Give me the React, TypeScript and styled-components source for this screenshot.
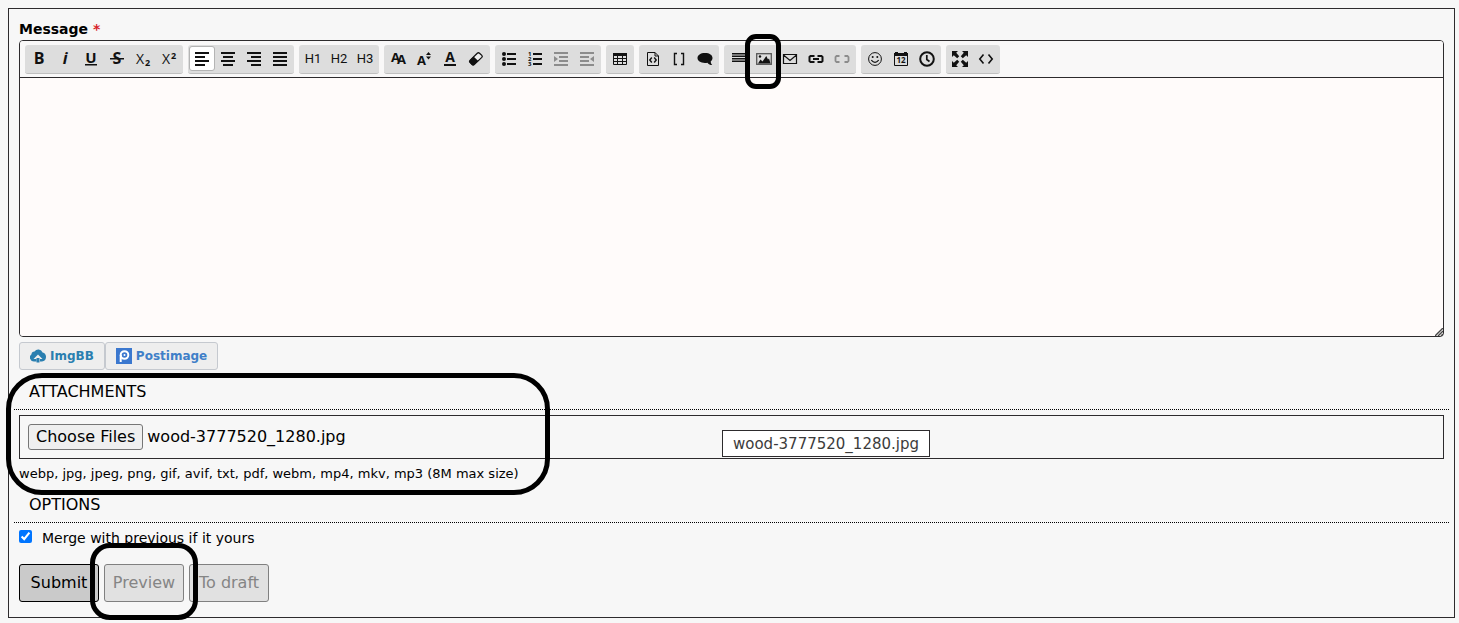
import React, { useEffect, useRef } from 'react';
import styled, { createGlobalStyle, css } from 'styled-components';

const sans = '"DejaVu Sans", Verdana, sans-serif';
const ink = '#2d2b2d';

const GlobalStyle = createGlobalStyle`
  *, *::before, *::after { box-sizing: border-box; }
  body {
    margin: 0;
    background: #f7f7f7;
    color: #000;
    font-family: ${sans};
    font-size: 16px;
  }
`;

const Page = styled.main`
  padding: 8px 4px 5px 8px;
`;

const Panel = styled.form`
  padding: 10px 10px 15px;
  border: 1px solid ${ink};
`;

const FieldLabel = styled.label`
  display: block;
  height: 21px;
  line-height: 21px;
  font-size: 14px;
  font-weight: bold;
`;

const Required = styled.span`
  color: #d8232a;
`;

const Editor = styled.div`
  position: relative;
  border: 1px solid ${ink};
  border-radius: 4px;
`;

const Toolbar = styled.div`
  display: flex;
  flex-wrap: wrap;
  gap: 5px;
  padding: 4px 5px 3px;
  border-bottom: 1px solid ${ink};
  background: #f9f8f8;
  border-radius: 3px 3px 0 0;
`;

const Group = styled.div`
  display: flex;
  padding: 1px 1px 2px;
  background: #dddddd;
  border-bottom: 1px solid #c0c0c0;
  border-radius: 3px;
`;

const Tool = styled.button<{ $active?: boolean; $dim?: boolean }>`
  display: flex;
  align-items: center;
  justify-content: center;
  position: relative;
  width: 26px;
  height: 25px;
  padding: 0;
  border: 0;
  border-radius: 3px;
  background: transparent;
  color: ${(p) => (p.$dim ? '#8c8c8c' : '#111')};
  ${(p) =>
    p.$active &&
    css`
      background: #fff;
      box-shadow: inset 0 0 0 1px #b4b4b4;
    `}
`;

const Heading = styled.span`
  font: 13px/20px Roboto, sans-serif;
`;

const IconSvg = styled.svg`
  overflow: visible;
  fill: currentColor;
  text {
    font-family: 'Open Sans', sans-serif;
    font-weight: 700;
  }
`;

const Message = styled.textarea`
  display: block;
  width: 100%;
  height: 258px;
  padding: 8px;
  border: 0;
  border-radius: 0 0 3px 3px;
  outline: 0;
  resize: vertical;
  background: #fffbfa;
  font: 14px/20px ${sans};
  &::-webkit-resizer { display: none; }
`;

const Grip = styled.svg`
  position: absolute;
  right: 0;
  bottom: 0;
  pointer-events: none;
`;

const Hosts = styled.div`
  display: flex;
  margin-top: 5px;
`;

const HostButton = styled.button<{ $color: string }>`
  display: flex;
  align-items: center;
  gap: 4px;
  height: 28px;
  padding: 0 10px;
  border: 1px solid #c5c9cf;
  border-radius: 3px;
  background: #eeeeee;
  color: ${(p) => p.$color};
  font: bold 12px/16px ${sans};
`;

const Section = styled.section`
  position: relative;
`;

const SectionTitle = styled.h2`
  margin: 0 -5px;
  padding: 8px 15px 7px;
  border-bottom: 1px dotted #000;
  font-size: 16px;
  font-weight: normal;
  line-height: 20px;
`;

const Attachments = styled(Section)`
  padding-top: 4px;
`;

const FileBox = styled.div`
  position: relative;
  margin-top: 5px;
  padding: 8px;
  border: 1px solid ${ink};
`;

const FileInput = styled.input`
  display: block;
  width: 100%;
  height: 26px;
  font: 16px/24px ${sans};
  &::file-selector-button {
    height: 26px;
    margin: 0 4px 0 0;
    padding: 0 7px;
    border: 1px solid #767676;
    border-radius: 3px;
    background: #efefef;
    color: #000;
    font: 16px/22px ${sans};
  }
`;

const Tip = styled.div`
  position: absolute;
  top: 14px;
  left: 702px;
  padding: 3px 0 2px;
  width: 208px;
  border: 1px solid ${ink};
  background: #fff;
  color: #3c3c3c;
  font-size: 15px;
  line-height: 20px;
  text-align: center;
`;

const Note = styled.p`
  margin: 0;
  padding-top: 2px;
  font-size: 13px;
  line-height: 26px;
`;

const Option = styled.label`
  display: flex;
  align-items: center;
  gap: 10px;
  padding-top: 2px;
  font-size: 14px;
  line-height: 26px;
  input {
    width: 13px;
    height: 13px;
    margin: 0 0 4px;
  }
`;

const Actions = styled.div`
  display: flex;
  gap: 5px;
  margin-top: 13px;
`;

const ActionItem = styled.div`
  position: relative;
`;

const Action = styled.button`
  width: 80px;
  height: 38px;
  padding: 0;
  border: 1px solid #000;
  border-radius: 3px;
  background: #cacaca;
  color: #000;
  font: 16px/20px ${sans};
  &:disabled {
    border-color: #808080;
    background: #e1e1e1;
    color: #858585;
  }
`;

const Mark = styled.span<{ $top: number; $left: number; $w: number; $h: number; $r: number }>`
  position: absolute;
  z-index: 2;
  top: ${(p) => p.$top}px;
  left: ${(p) => p.$left}px;
  width: ${(p) => p.$w}px;
  height: ${(p) => p.$h}px;
  border: 5px solid #000;
  border-radius: ${(p) => p.$r}px;
  pointer-events: none;
`;

const Icon = ({ children }: { children: React.ReactNode }) => (
  <IconSvg width="16" height="16" viewBox="0 0 16 16" aria-hidden="true">
    {children}
  </IconSvg>
);

const Lines = ({ rows }: { rows: [number, number][] }) => (
  <Icon>
    {rows.map(([x, w], i) => (
      <rect key={i} x={x} y={1 + i * 4} width={w} height="2" />
    ))}
  </Icon>
);

const icons = {
  bold: (
    <Icon>
      <text x="8" y="13" fontSize="16" textAnchor="middle">B</text>
    </Icon>
  ),
  italic: (
    <Icon>
      <text x="8" y="13" fontSize="16" fontStyle="italic" textAnchor="middle">i</text>
    </Icon>
  ),
  underline: (
    <Icon>
      <text x="8" y="12" fontSize="15" textAnchor="middle">U</text>
      <rect x="2" y="13" width="12" height="1.500" />
    </Icon>
  ),
  strike: (
    <Icon>
      <text x="8" y="13" fontSize="16" textAnchor="middle">S</text>
      <rect x="1" y="7" width="14" height="1.500" />
    </Icon>
  ),
  subscript: (
    <Icon>
      <text x="1" y="13" fontSize="14">
        <tspan fontWeight="400">X</tspan>
        <tspan dx="1" dy="2" fontSize="9">2</tspan>
      </text>
    </Icon>
  ),
  superscript: (
    <Icon>
      <text x="1" y="13" fontSize="14">
        <tspan fontWeight="400">X</tspan>
        <tspan dx="1" dy="-5" fontSize="9">2</tspan>
      </text>
    </Icon>
  ),
  fonts: (
    <Icon>
      <text x="1" y="11" fontSize="13">
        A<tspan dx="-3" dy="2">A</tspan>
      </text>
    </Icon>
  ),
  size: (
    <Icon>
      <text x="1" y="14" fontSize="13">A</text>
      <path d="M12.500 1 15 4h-5zM12.500 8.500 10 5.500h5z" />
    </Icon>
  ),
  color: (
    <Icon>
      <text x="8" y="11" fontSize="14" textAnchor="middle">A</text>
      <rect x="2" y="13" width="12" height="2" />
    </Icon>
  ),
  eraser: (
    <Icon>
      <path
        d="M9.300 2.200 2 9.400q-1 1 0 2l2.200 2.200q1 1 2 0L13.800 6.400q1-1 0-2l-2.300-2.200q-1.100-1-2.200 0z"
        fill="#eee"
        stroke="currentColor"
        strokeWidth="1.300"
      />
      <path d="M5.500 5.500 1.600 9.500q-.8 1 0 2l2.300 2.400q1 .8 2 0L10.300 10z" />
    </Icon>
  ),
  bullets: (
    <Icon>
      {[3, 8, 13].map((y) => (
        <g key={y}>
          <circle cx="3" cy={y} r="2" />
          <rect x="6" y={y - 1} width="9" height="2" />
        </g>
      ))}
    </Icon>
  ),
  numbers: (
    <Icon>
      <text y="5" fontSize="6">
        <tspan x="1">1</tspan>
        <tspan x="1" dy="5">2</tspan>
        <tspan x="1" dy="5">3</tspan>
      </text>
      <path d="M6 2h9v2H6zM6 7h9v2H6zM6 12h9v2H6z" />
    </Icon>
  ),
  indent: (
    <Icon>
      <path d="M1 1h14v2H1zM6 5h9v2H6zM6 9h9v2H6zM1 13h14v2H1zM1 5l4 3-4 3z" />
    </Icon>
  ),
  outdent: (
    <Icon>
      <path d="M1 1h14v2H1zM1 5h9v2H1zM1 9h9v2H1zM1 13h14v2H1zM15 5l-4 3 4 3z" />
    </Icon>
  ),
  table: (
    <Icon>
      <path d="M1 2h14v3H1z" />
      <path d="M1.500 2.500h13v11h-13zM1 7.500h14M1 10.500h14M5.500 5v9M10.500 5v9" fill="none" stroke="currentColor" />
    </Icon>
  ),
  code: (
    <Icon>
      <path d="M3 1.500h7l3.500 3.500v9.500h-11v-13zM10 1.500v3.500h3.500" fill="none" stroke="currentColor" />
      <path d="M6.800 6.500 4.800 9l2 2.500M9.200 6.500l2 2.500-2 2.500" fill="none" stroke="currentColor" strokeWidth="1.400" />
    </Icon>
  ),
  brackets: (
    <Icon>
      <path d="M6 2.500H3.500v11H6M10 2.500h2.500v11H10" fill="none" stroke="currentColor" strokeWidth="1.400" />
    </Icon>
  ),
  quote: (
    <Icon>
      <path d="M8 2c4.500 0 7.500 2 7.500 5 0 1.500-.7 2.600-1.800 3.400.1 1.500.6 2.500 1.500 3.600-2 0-3.700-.8-4.800-2.300-.8.200-1.500.2-2.400.2-4.500 0-7.500-2-7.500-4.900S3.500 2 8 2z" />
    </Icon>
  ),
  rule: (
    <Icon>
      <path d="M2 2h13v1.500H2zM2 4.500h13V6H2zM2 7h13v1.500H2zM2 9.500h13V11H2z" />
    </Icon>
  ),
  image: (
    <Icon>
      <rect x=".7" y="2.700" width="14.600" height="10.600" fill="none" stroke="#555" strokeWidth="1.300" />
      <circle cx="4" cy="5.500" r="1.200" />
      <path d="M2 12.500 4.500 8.500 6.500 10.500 10.300 5 12 8.500 13 7.500 14.500 12.500z" />
    </Icon>
  ),
  email: (
    <Icon>
      <path d="M1.500 3.500h13v9h-13zM1.500 4 8 9.500 14.500 4" fill="none" stroke="currentColor" strokeWidth="1.200" />
    </Icon>
  ),
  link: (
    <Icon>
      <path d="M6.500 5H2.500L1.500 6v4L2.500 11h4M9.500 5h4l1 1v4l-1 1h-4M5 8h6" fill="none" stroke="currentColor" strokeWidth="2" />
    </Icon>
  ),
  unlink: (
    <Icon>
      <path d="M5.500 5H2.500L1.500 6v4L2.500 11h3M10.500 5h3l1 1v4l-1 1h-3" fill="none" stroke="currentColor" strokeWidth="1.800" />
    </Icon>
  ),
  smile: (
    <Icon>
      <circle cx="8" cy="8" r="6.400" fill="none" stroke="currentColor" />
      <circle cx="5.700" cy="6" r="1" />
      <circle cx="10.300" cy="6" r="1" />
      <path d="M4.300 9.200q3.700 4.300 7.400 0" fill="none" stroke="currentColor" strokeWidth="1.200" />
    </Icon>
  ),
  calendar: (
    <Icon>
      <path d="M1 2h1V1h3v1h6V1h3v1h1v3H1z" />
      <path d="M1.500 4v10.500h13V4" fill="none" stroke="currentColor" />
      <text x="8" y="12" fontSize="8" textAnchor="middle">12</text>
    </Icon>
  ),
  clock: (
    <Icon>
      <circle cx="8" cy="8" r="6.800" fill="none" stroke="currentColor" strokeWidth="2" />
      <path d="M7.800 4v4.500l2.700 2" fill="none" stroke="currentColor" strokeWidth="1.700" />
    </Icon>
  ),
  maximize: (
    <Icon>
      <path d="M0 0h6L4.200 1.800 7.200 5.200 5.200 7.200 1.800 4.200 0 6zM16 0v6l-1.800-1.800-3.400 3-2-2 3-3.400L10 0zM0 16v-6l1.800 1.800 3.400-3 2 2-3 3.400L6 16zM16 16h-6l1.800-1.800-3-3.400 2-2 3.400 3L16 10z" />
    </Icon>
  ),
  source: (
    <Icon>
      <path d="M5.500 3.500 1.800 8l3.700 4.500M10.500 3.500 14.200 8l-3.700 4.500" fill="none" stroke="currentColor" strokeWidth="1.600" />
    </Icon>
  ),
};

type ToolDef = { name: string; body: React.ReactNode; active?: boolean; dim?: boolean; marked?: boolean };

const groups: ToolDef[][] = [
  [
    { name: 'Bold', body: icons.bold },
    { name: 'Italic', body: icons.italic },
    { name: 'Underline', body: icons.underline },
    { name: 'Strikethrough', body: icons.strike },
    { name: 'Subscript', body: icons.subscript },
    { name: 'Superscript', body: icons.superscript },
  ],
  [
    { name: 'Align left', active: true, body: <Lines rows={[[1, 14], [1, 10], [1, 14], [1, 10]]} /> },
    { name: 'Center', body: <Lines rows={[[1, 14], [3, 10], [1, 14], [3, 10]]} /> },
    { name: 'Align right', body: <Lines rows={[[1, 14], [5, 10], [1, 14], [5, 10]]} /> },
    { name: 'Justify', body: <Lines rows={[[1, 14], [1, 14], [1, 14], [1, 14]]} /> },
  ],
  [
    { name: 'Heading 1', body: <Heading>H1</Heading> },
    { name: 'Heading 2', body: <Heading>H2</Heading> },
    { name: 'Heading 3', body: <Heading>H3</Heading> },
  ],
  [
    { name: 'Font name', body: icons.fonts },
    { name: 'Font size', body: icons.size },
    { name: 'Font color', body: icons.color },
    { name: 'Remove formatting', body: icons.eraser },
  ],
  [
    { name: 'Bullet list', body: icons.bullets },
    { name: 'Numbered list', body: icons.numbers },
    { name: 'Add indent', dim: true, body: icons.indent },
    { name: 'Remove indent', dim: true, body: icons.outdent },
  ],
  [{ name: 'Insert a table', body: icons.table }],
  [
    { name: 'Code', body: icons.code },
    { name: 'Inline code', body: icons.brackets },
    { name: 'Insert a quote', body: icons.quote },
  ],
  [
    { name: 'Insert a horizontal rule', body: icons.rule },
    { name: 'Insert an image', body: icons.image, marked: true },
    { name: 'Insert an email', body: icons.email },
    { name: 'Insert a link', body: icons.link },
    { name: 'Unlink', dim: true, body: icons.unlink },
  ],
  [
    { name: 'Insert an emoticon', body: icons.smile },
    { name: 'Insert current date', body: icons.calendar },
    { name: 'Insert current time', body: icons.clock },
  ],
  [
    { name: 'Maximize', body: icons.maximize },
    { name: 'View source', body: icons.source },
  ],
];

const fileName = 'wood-3777520_1280.jpg';

export default function App() {
  const fileRef = useRef<HTMLInputElement>(null);

  useEffect(() => {
    const transfer = new DataTransfer();
    transfer.items.add(new File([''], fileName, { type: 'image/jpeg' }));
    if (fileRef.current) fileRef.current.files = transfer.files;
  }, []);

  return (
    <Page>
      <GlobalStyle />
      <Panel onSubmit={(e) => e.preventDefault()}>
        <FieldLabel htmlFor="message">
          Message <Required>*</Required>
        </FieldLabel>
        <Editor>
          <Toolbar role="toolbar">
            {groups.map((group, i) => (
              <Group key={i}>
                {group.map((tool) => (
                  <Tool key={tool.name} type="button" aria-label={tool.name} $active={tool.active} $dim={tool.dim}>
                    {tool.body}
                    {tool.marked && <Mark $top={-12} $left={-6} $w={36} $h={55} $r={11} />}
                  </Tool>
                ))}
              </Group>
            ))}
          </Toolbar>
          <Message id="message" />
          <Grip width="8" height="8" viewBox="0 0 8 8" aria-hidden="true">
            <path d="M0 8 8 0M3 8l5-5M6 8l2-2" stroke="#444" strokeWidth="1.400" />
          </Grip>
        </Editor>

        <Hosts>
          <HostButton type="button" $color="#2a7fb0">
            <svg width="16" height="16" viewBox="0 0 16 16" aria-hidden="true">
              <path
                fill="#2a7fb0"
                d="M6.500 13.500H4A4 4 0 0 1 1.500 6.300 3 3 0 0 1 4.500 3.500 4.600 4.600 0 0 1 12.600 4.500 4.600 4.600 0 0 1 12 13.500H10V11h2.500L8 6.500 3.500 11H6.500z"
              />
              <path fill="#2a7fb0" d="M6.500 10h3v4.500h-3z" />
            </svg>
            ImgBB
          </HostButton>
          <HostButton type="button" $color="#3f7fc8">
            <svg width="16" height="16" viewBox="0 0 16 16" aria-hidden="true">
              <rect width="16" height="16" fill="#3b78cf" />
              <circle cx="8.500" cy="7" r="3.800" fill="none" stroke="#fff" strokeWidth="2" />
              <path d="M4.700 7v7" stroke="#fff" strokeWidth="2" />
              <circle cx="8.500" cy="7" r="1" fill="#fff" />
            </svg>
            Postimage
          </HostButton>
        </Hosts>

        <Attachments>
          <SectionTitle>ATTACHMENTS</SectionTitle>
          <FileBox>
            <FileInput ref={fileRef} type="file" multiple aria-label="Attachments" />
            <Tip role="tooltip">{fileName}</Tip>
          </FileBox>
          <Note>webp, jpg, jpeg, png, gif, avif, txt, pdf, webm, mp4, mkv, mp3 (8M max size)</Note>
          <Mark $top={3} $left={-13} $w={544} $h={122} $r={36} />
        </Attachments>

        <Section>
          <SectionTitle>OPTIONS</SectionTitle>
          <Option>
            <input type="checkbox" defaultChecked />
            Merge with previous if it yours
          </Option>
        </Section>

        <Actions>
          <ActionItem>
            <Action type="submit">Submit</Action>
          </ActionItem>
          <ActionItem>
            <Action type="button" disabled>Preview</Action>
            <Mark $top={-21} $left={-14} $w={108} $h={77} $r={20} />
          </ActionItem>
          <ActionItem>
            <Action type="button" disabled>To draft</Action>
          </ActionItem>
        </Actions>
      </Panel>
    </Page>
  );
}
